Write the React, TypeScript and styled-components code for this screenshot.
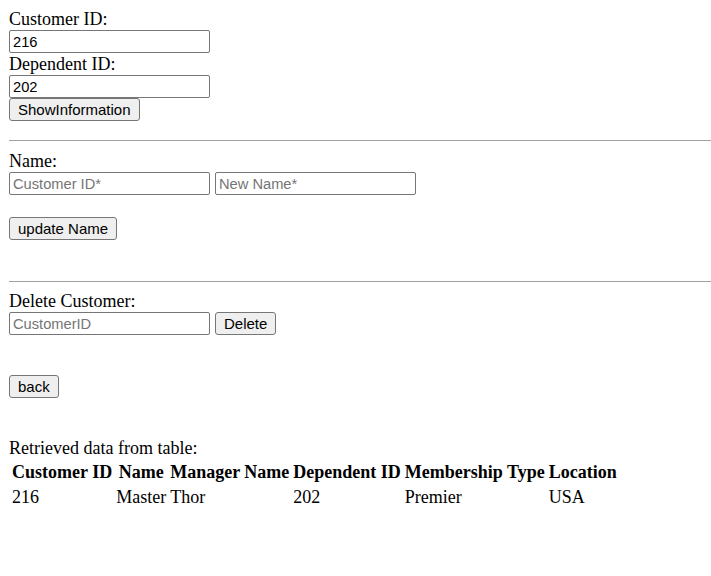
import styled, { createGlobalStyle } from "styled-components";

const GlobalStyle = createGlobalStyle`
  html, body {
    margin: 0;
    padding: 0;
    background: #ffffff;
  }
  body {
    font-family: "Liberation Serif", "Times New Roman", serif;
    font-size: 18px;
    color: #000000;
  }
`;

const Page = styled.div`
  display: flex;
  flex-direction: column;
  align-items: flex-start;
  padding: 8px 0 40px 9px;
`;

const Label = styled.div<{ $top?: number }>`
  line-height: 22px;
  margin-top: ${(p) => p.$top ?? 0}px;
`;

const TextInput = styled.input`
  box-sizing: border-box;
  width: 201px;
  height: 23px;
  margin: 0;
  padding: 1px 3px;
  border: 1px solid #767676;
  border-radius: 2px;
  background: #ffffff;
  font-family: "Liberation Sans", Arial, sans-serif;
  font-size: 14.67px;
  color: #000000;
  outline: none;

  &::placeholder {
    color: #757575;
  }
`;

const Button = styled.button<{ $top?: number }>`
  box-sizing: border-box;
  height: 23px;
  margin: ${(p) => p.$top ?? 0}px 0 0 0;
  padding: 1px 8px;
  border: 1px solid #767676;
  border-radius: 3px;
  background: #efefef;
  font-family: "Liberation Sans", Arial, sans-serif;
  font-size: 15px;
  color: #000000;
  cursor: pointer;
`;

const Divider = styled.hr<{ $top: number; $bottom: number }>`
  align-self: stretch;
  height: 0;
  margin: ${(p) => p.$top}px 0 ${(p) => p.$bottom}px 0;
  border: none;
  border-top: 1px solid #a0a0a0;
`;

const InputRow = styled.div`
  display: flex;
  align-items: center;
  gap: 5px;
`;

const DataTable = styled.table`
  margin-top: 0;
  border-spacing: 2px;
  font-size: 18px;
  line-height: 21px;

  th,
  td {
    padding: 1px;
  }
  th {
    font-weight: bold;
    text-align: center;
  }
  td {
    text-align: left;
  }
`;

const columns = [
  "Customer ID",
  "Name",
  "Manager Name",
  "Dependent ID",
  "Membership Type",
  "Location",
];

const rows = [["216", "Master", "Thor", "202", "Premier", "USA"]];

export default function App() {
  return (
    <>
      <GlobalStyle />
      <Page>
        <Label>Customer ID:</Label>
        <TextInput defaultValue="216" />
        <Label>Dependent ID:</Label>
        <TextInput defaultValue="202" />
        <Button>ShowInformation</Button>

        <Divider $top={19} $bottom={9} />

        <Label>Name:</Label>
        <InputRow>
          <TextInput placeholder="Customer ID*" />
          <TextInput placeholder="New Name*" />
        </InputRow>
        <Button $top={22}>update Name</Button>

        <Divider $top={41} $bottom={8} />

        <Label>Delete Customer:</Label>
        <InputRow>
          <TextInput placeholder="CustomerID" />
          <Button>Delete</Button>
        </InputRow>

        <Button $top={40}>back</Button>

        <Label $top={39}>Retrieved data from table:</Label>
        <DataTable>
          <thead>
            <tr>
              {columns.map((c) => (
                <th key={c}>{c}</th>
              ))}
            </tr>
          </thead>
          <tbody>
            {rows.map((r, i) => (
              <tr key={i}>
                {r.map((v, j) => (
                  <td key={j}>{v}</td>
                ))}
              </tr>
            ))}
          </tbody>
        </DataTable>
      </Page>
    </>
  );
}
